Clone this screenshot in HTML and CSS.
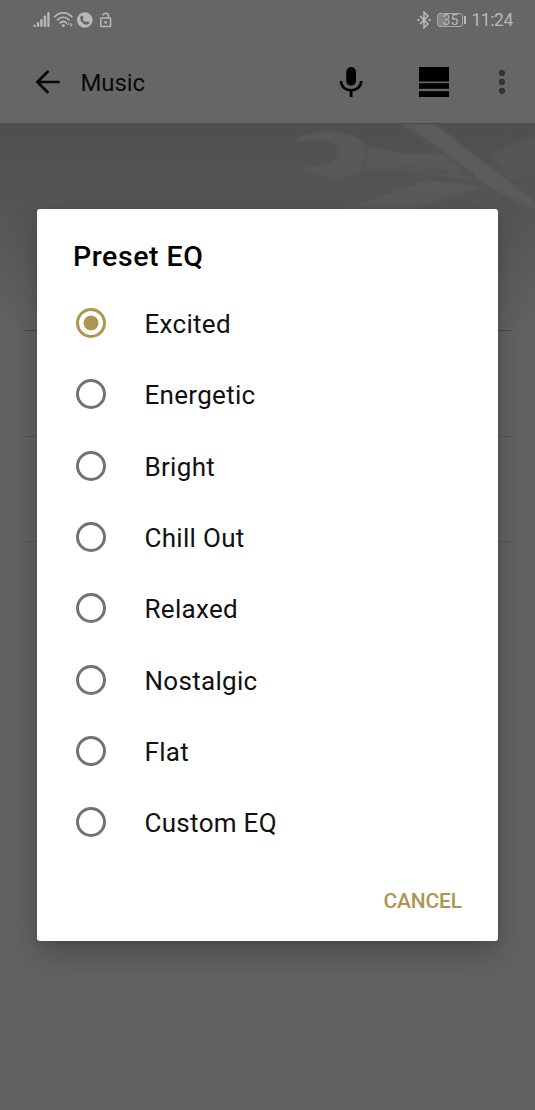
FILE: index.html
```html
<!DOCTYPE html>
<html lang="en">
<head>
  <meta charset="UTF-8" />
  <title>Music - Preset EQ</title>
  <meta name="viewport" content="width=device-width, initial-scale=1" />
  <link rel="stylesheet" href="styles.css">
</head>
<body>

  <div class="screen">
    <div class="status-bar">
      <svg class="status-left" width="84" height="20" viewBox="0 0 84 20" fill="#b8b8b8">
        <!-- signal -->
        <rect x="0.3" y="14.6" width="2.4" height="2.4" rx="1" />
        <rect x="3.8" y="12" width="2.4" height="5" rx="1" />
        <rect x="7.2" y="9" width="2.4" height="8" rx="1" />
        <rect x="10.7" y="5.6" width="2.4" height="11.4" rx="1" />
        <rect x="14.2" y="2" width="2.4" height="15" rx="1" />
        <!-- wifi -->
        <g fill="none" stroke="#b8b8b8" stroke-width="1.8" stroke-linecap="round">
          <path d="M21.8 6.7 C26.8 1.7 33.8 1.7 38.8 6.7" />
          <path d="M24.6 9.8 C28 6.5 32.6 6.5 36 9.8" />
          <path d="M27.3 12.8 C29.2 11.1 31.4 11.1 33.3 12.8" />
        </g>
        <circle cx="30.3" cy="15.4" r="1.5" />
        <path d="M34 15l2-3.5V15zM37.2 12.5v5l2.6-3z" opacity=".8" />
        <!-- call -->
        <circle cx="51.8" cy="10" r="7.8" />
        <path d="M47.6 6.4c1.2-1.6 2-1.3 2.9.9.2.7-1 1.3-.8 1.8.6 1.5 1.7 2.5 3.1 3 .7.2 1.2-1.1 1.9-.8 2.2.9 2.4 1.8.8 2.9-3.8 2.3-10-4-7.9-7.8z" fill="#666" />
        <!-- padlock -->
        <g fill="none" stroke="#b8b8b8" stroke-width="1.5">
          <rect x="67.8" y="8.1" width="9.8" height="8.5" rx=".6" />
          <path d="M75.5 8V5.8C75.5 2.4 70 2.4 70 5.6" />
        </g>
        <circle cx="72.7" cy="12.4" r="1.4" />
      </svg>

      <div class="status-right">
        <svg width="14" height="18" viewBox="0 0 14 18" fill="none" stroke="#b8b8b8" stroke-width="1.6">
          <path d="M3 5l8 8-4 3.7V1.3L11 5l-8 8" />
          <path d="M.4 9h1.9M11.7 9h1.9" stroke-width="1.8" />
        </svg>
        <div class="battery"><span>35</span></div>
        <span class="battery-tip"></span>
        <span class="clock">11:24</span>
      </div>
    </div>

    <div class="toolbar">
      <svg class="back" width="24" height="24" viewBox="0 0 24 24" fill="none" stroke="#080808" stroke-width="2.7" stroke-linecap="round" stroke-linejoin="round">
        <path d="M22.6 12H1.6M11.6 1.8L1.4 12l10.2 10.2" />
      </svg>
      <span class="page-title">Music</span>
      <svg class="mic" width="24" height="32" viewBox="0 0 24 32">
        <rect x="7.2" y="1" width="9.8" height="18.8" rx="4.9" fill="#000" />
        <path d="M2 15c0 12.4 20.2 12.4 20.2 0" fill="none" stroke="#000" stroke-width="2.6" />
        <rect x="10.7" y="24" width="2.8" height="7" fill="#000" />
      </svg>
      <svg class="layout-icon" width="30" height="30" viewBox="0 0 30 30" fill="#000">
        <rect width="30" height="14.5" />
        <rect y="16.2" width="30" height="5.6" />
        <rect y="24.2" width="30" height="5.8" />
      </svg>
      <svg width="8" height="26" viewBox="0 0 8 26" fill="#333">
        <circle cx="4" cy="4" r="3.1" />
        <circle cx="4" cy="12.9" r="3.1" />
        <circle cx="4" cy="21.8" r="3.1" />
      </svg>
    </div>

    <div class="banner">
      <!-- tools artwork -->
      <svg width="535" height="206" viewBox="0 0 535 206">
        <defs>
          <filter id="soft"><feGaussianBlur stdDeviation="1" /></filter>
        </defs>
        <g filter="url(#soft)">
          <path d="M293 18C304 8 322 6 338 8C352 9 361 15 367 22L400 29L445 29L473 57L400 45L365 45C354 55 335 56 318 51C307 48 301 46 298 43C312 42 328 42 335 35C341 28 337 20 326 17C314 15 304 17 293 18Z" fill="#585858" />
          <path d="M364 20Q370 32 362 45" fill="none" stroke="#515151" stroke-width="1.5" />
          <path d="M345 85L424 57L478 60L480 64L410 85Z" fill="#5a5a5a" />
          <path d="M490 30L535 12V50L510 55Z" fill="#565656" />
          <path d="M400 0H435L535 78V86L484 60Z" fill="#5b5b5b" />
          <path d="M410 4L474 52M400 42L473 52M430 53L478 61" fill="none" stroke="#4c4c4c" stroke-width="1.2" />
          <path d="M402 34L448 34M395 30Q392 38 399 44" fill="none" stroke="#5e5e5e" />
        </g>
      </svg>
    </div>
    <div class="setting-row first"></div>
    <div class="setting-row"></div>
    <div class="setting-row"></div>
  </div>

  <div class="overlay">
    <div class="dialog">
      <h1>Preset EQ</h1>
      <label class="option"><input type="radio" name="eq" checked /><span>Excited</span></label>
      <label class="option"><input type="radio" name="eq" /><span>Energetic</span></label>
      <label class="option"><input type="radio" name="eq" /><span>Bright</span></label>
      <label class="option"><input type="radio" name="eq" /><span>Chill Out</span></label>
      <label class="option"><input type="radio" name="eq" /><span>Relaxed</span></label>
      <label class="option"><input type="radio" name="eq" /><span>Nostalgic</span></label>
      <label class="option"><input type="radio" name="eq" /><span>Flat</span></label>
      <label class="option"><input type="radio" name="eq" /><span>Custom EQ</span></label>
      <div class="actions">
        <button>CANCEL</button>
      </div>
    </div>
  </div>

</body>
</html>
```
FILE: styles.css
```css
* {
  box-sizing: border-box;
}
body {
  font-family: Roboto, sans-serif;
  margin: 0;
  background: #626262;
}
.screen {
  height: 1110px;
  overflow: hidden;
}
svg {
  display: block;
  flex: none;
}
.status-bar {
  height: 40px;
  padding: 0 22px 0 33px;
  display: flex;
  align-items: center;
  justify-content: space-between;
  background: #666;
}
.status-right {
  display: flex;
  align-items: center;
  color: #b8b8b8;
}
.battery {
  width: 26px;
  height: 14px;
  margin-left: 6px;
  border: 1px solid #aaa;
  border-radius: 3px;
  background: linear-gradient(to right, #858585 36%, transparent 36%);
  font-size: 14px;
  line-height: 13px;
  text-align: center;
}
.battery-tip {
  width: 2px;
  height: 8px;
  margin-left: 1px;
  background: #b8b8b8;
}
.clock {
  margin-left: 5px;
  font-size: 17.5px;
  line-height: 20px;
  letter-spacing: -0.4px;
}
.toolbar {
  height: 83px;
  padding: 0 29px 0 36px;
  display: flex;
  align-items: center;
  background: #666;
}
.page-title {
  flex: 1;
  margin-left: 20.5px;
  padding-top: 2px;
  font-size: 24px;
  letter-spacing: -0.1px;
  color: #0a0a0a;
}
.layout-icon {
  margin: 0 49px 0 56px;
}
.banner {
  height: 207px;
  background: linear-gradient(to bottom, #4f4f4f, #555 40%, #626262);
  border-top: 1px solid #4c4c4c;
}
.setting-row {
  height: 105.5px;
  margin: 0 24px;
  border-top: 1px solid #555;
}
.setting-row.first {
  border-color: #484848;
}
.overlay {
  position: absolute;
  top: 0;
  left: 0;
  width: 535px;
  height: 1110px;
  padding: 208.5px 37px 0;
}
.dialog {
  width: 461px;
  height: 732.5px;
  background: #fff;
  border-radius: 3px;
  box-shadow: 0 14px 32px rgba(0, 0, 0, 0.22), 0 2px 6px rgba(0, 0, 0, 0.1);
}
h1 {
  height: 79px;
  margin: 0;
  padding: 31px 36px 0;
  font-size: 28.5px;
  font-weight: 500;
  line-height: 33px;
  letter-spacing: 0.55px;
  color: #000;
}
.option {
  height: 71.3px;
  padding-left: 38.5px;
  display: flex;
  align-items: center;
  font-size: 26px;
  letter-spacing: 0.3px;
  color: #111;
}
.option span {
  padding-top: 2px;
}
input {
  appearance: none;
  width: 30px;
  height: 30px;
  margin: 0 39px 0 0;
  border: 3px solid #727272;
  border-radius: 50%;
}
input:checked {
  border-color: #b0954f;
  background: radial-gradient(circle, #b0954f 7px, #fff 7.8px);
}
.actions {
  padding: 28px 36px 0;
  text-align: right;
}
button {
  padding: 0;
  border: none;
  background: none;
  font-family: inherit;
  font-size: 21px;
  font-weight: 500;
  line-height: 30px;
  letter-spacing: -0.15px;
  color: #b0954f;
}
```
